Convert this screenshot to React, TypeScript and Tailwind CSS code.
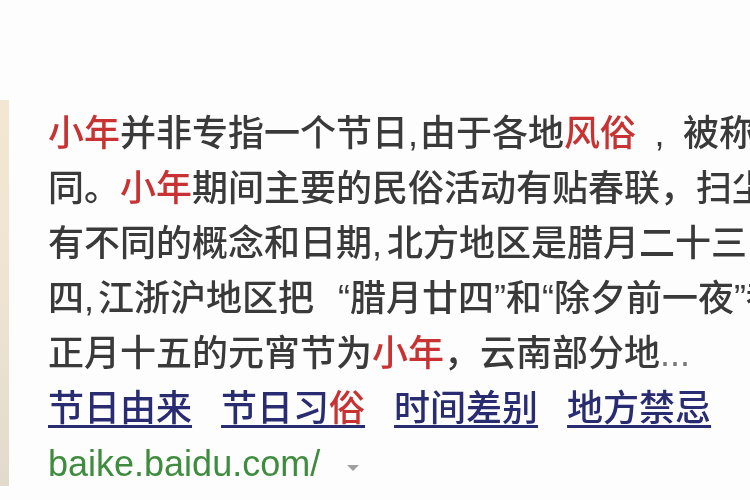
const red = "text-[#c83232]";

function Narrow({ w = "w-[13px]" }: { w?: string }) {
  return <span className={`inline-block ${w}`}>,</span>;
}

const links = [
  { parts: [{ t: "节日由来" }] },
  { parts: [{ t: "节日习" }, { t: "俗", hl: true }] },
  { parts: [{ t: "时间差别" }] },
  { parts: [{ t: "地方禁忌" }] },
];

export default function App() {
  return (
    <div
      className="flex h-[500px] w-[750px] overflow-hidden bg-[#fdfdfd] text-[36px] font-medium leading-[55px] text-[#3a3a3a] blur-[0.5px]"
      style={{ fontFamily: '"Liberation Sans", "Noto Sans CJK SC", sans-serif' }}
    >
      <div className="mt-[100px] h-[386px] w-[9px] shrink-0 bg-gradient-to-b from-[#f3e7d3] via-[#efe4d2] to-[#e2dacb]" />

      <div className="min-w-0 flex-1 overflow-hidden pl-[39px] pt-[106px]">
        <div className="whitespace-nowrap">
          <span className={red}>小年</span>并非专指一个节日
          <Narrow w="w-[12px]" />
          由于各地<span className={red}>风俗</span>
          <span className="inline-block w-[47px] text-center">,</span>被称为“小年”的日子
        </div>
        <div className="whitespace-nowrap">
          同。<span className={red}>小年</span>期间主要的民俗活动有贴春联，扫尘，祭灶等
        </div>
        <div className="whitespace-nowrap">
          有不同的概念和日期
          <Narrow w="w-[15px]" />
          北方地区是腊月二十三，南方地区
        </div>
        <div className="whitespace-nowrap">
          四<Narrow w="w-[14px]" />
          江浙沪地区把<span className="inline-block w-[36px] text-right">“</span>腊月廿四”和“除夕前一夜”都称为
        </div>
        <div className="whitespace-nowrap">
          正月十五的元宵节为<span className={red}>小年</span>，云南部分地<span className="text-[#777]">...</span>
        </div>

        <div className="flex gap-[29px] whitespace-nowrap">
          {links.map((l) => (
            <a
              key={l.parts.map((p) => p.t).join("")}
              href="#"
              className="text-[#2a2c72] underline decoration-[3px] underline-offset-[4px]"
            >
              {l.parts.map((p) =>
                p.hl ? (
                  <span key={p.t} className={red}>
                    {p.t}
                  </span>
                ) : (
                  <span key={p.t}>{p.t}</span>
                )
              )}
            </a>
          ))}
        </div>

        <div className="flex items-center whitespace-nowrap">
          <span className="font-normal text-[#3f8c3f]">baike.baidu.com/</span>
          <svg className="ml-[26px] mt-[8px]" width="14" height="8" viewBox="0 0 14 8">
            <path d="M1 1 L13 1 L7 7 Z" fill="#a0a0a0" />
          </svg>
        </div>
      </div>
    </div>
  );
}
